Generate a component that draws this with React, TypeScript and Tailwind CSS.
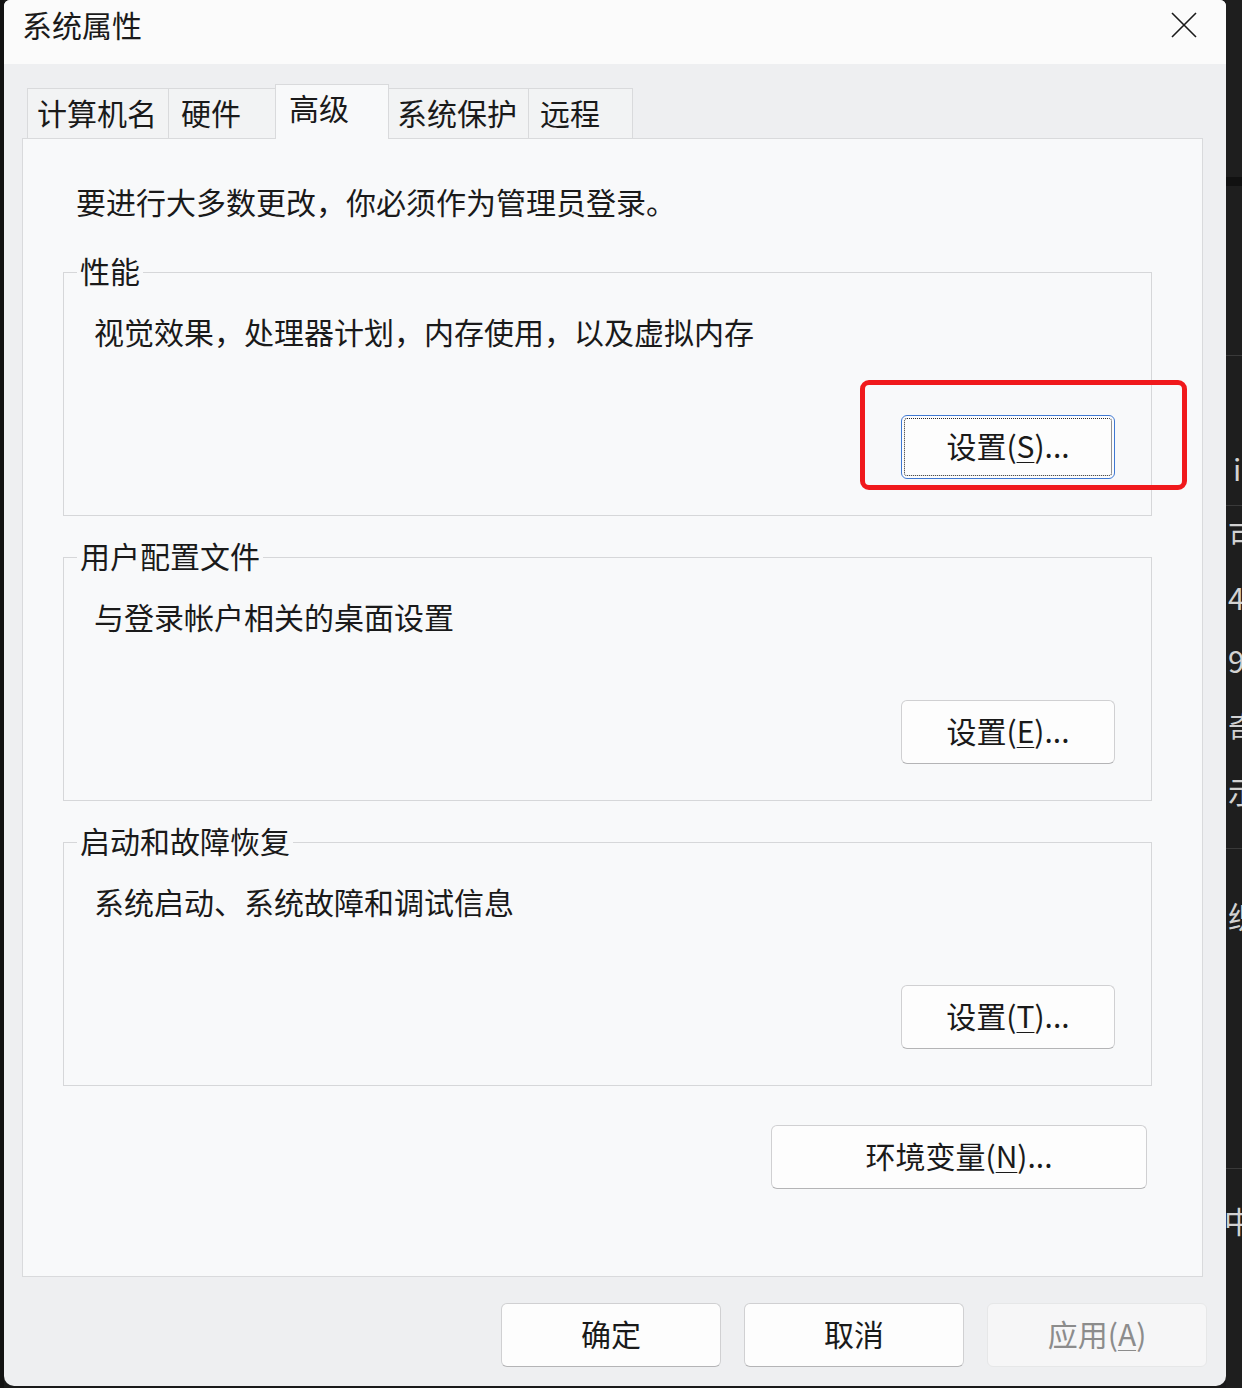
import type { ReactNode } from "react";

type TabDef = { label: string; w: string; pl: string; active?: boolean };

const tabs: TabDef[] = [
  { label: "计算机名", w: "w-[142px]", pl: "pl-[9px]" },
  { label: "硬件", w: "w-[108px]", pl: "pl-[12px]" },
  { label: "高级", w: "w-[114px]", pl: "pl-[13px]", active: true },
  { label: "系统保护", w: "w-[141px]", pl: "pl-[8px]" },
  { label: "远程", w: "w-[105px]", pl: "pl-[11px]" },
];

function Mnemonic({ children }: { children: ReactNode }) {
  return <span className="underline decoration-1 underline-offset-[4px]">{children}</span>;
}

function DialogButton({
  children,
  width,
  focused,
  disabled,
}: {
  children: ReactNode;
  width: string;
  focused?: boolean;
  disabled?: boolean;
}) {
  let tone = "border-[#d0d0d2] border-b-[#b4b4b6] bg-[#fdfdfd] text-[#1a1a1a]";
  if (focused) tone = "border-[#3f78d2] bg-[#fdfdfd] text-[#1a1a1a]";
  if (disabled) tone = "border-[#e6e7e8] bg-[#f6f6f7] text-[#8c8c8c]";
  return (
    <button
      type="button"
      disabled={disabled}
      className={`relative flex h-[64px] ${width} shrink-0 items-center justify-center rounded-[6px] border pb-[4px] leading-[40px] ${tone}`}
    >
      {focused && (
        <span className="pointer-events-none absolute inset-[2px] rounded-[3px] border border-dotted border-[#2a2a2a]" />
      )}
      {children}
    </button>
  );
}

function Group({
  title,
  desc,
  className,
  children,
}: {
  title: string;
  desc: string;
  className: string;
  children: ReactNode;
}) {
  return (
    <fieldset className={`w-[1089px] border border-[#d6d7d9] pb-[36px] pl-[13px] pr-[36px] ${className}`}>
      <legend className="px-[3px] pb-[4px] leading-[36px]">{title}</legend>
      <p className="ml-[17px] mt-[19px] leading-[40px]">{desc}</p>
      <div className="mt-[64px] flex justify-end">{children}</div>
    </fieldset>
  );
}

// scraps of the window sitting behind the dialog
const behind = [
  { ch: "i", top: "top-[448px]", left: "left-[7px]" },
  { ch: "可", top: "top-[514px]", left: "left-[2px]" },
  { ch: "4", top: "top-[577px]", left: "left-[2px]" },
  { ch: "9", top: "top-[640px]", left: "left-[2px]" },
  { ch: "奇", top: "top-[705px]", left: "left-[2px]" },
  { ch: "示", top: "top-[770px]", left: "left-[2px]" },
  { ch: "织", top: "top-[895px]", left: "left-[2px]" },
  { ch: "中", top: "top-[1200px]", left: "left-[-2px]" },
];

export default function App() {
  return (
    <div className="flex h-[1388px] w-[1242px] overflow-hidden bg-[#1a1a1a] font-['Noto_Sans_CJK_SC','Liberation_Sans',sans-serif] text-[30px] text-[#1a1a1a]">
      <div className="w-[4px] shrink-0 bg-[#121212]" />

      <div className="flex h-[1386px] w-[1222px] shrink-0 flex-col overflow-hidden rounded-b-[10px] rounded-t-[6px] bg-[#eeeff1]">
        {/* title bar */}
        <div className="flex h-[64px] shrink-0 items-start justify-between bg-[#fbfbfb] pl-[18px] pr-[29px]">
          <span className="mt-[4px] leading-[40px]">系统属性</span>
          <svg width="26" height="26" viewBox="0 0 26 26" className="mt-[12px]">
            <path d="M1 1 L25 25 M25 1 L1 25" stroke="#1a1a1a" strokeWidth="1.6" fill="none" />
          </svg>
        </div>

        {/* tabs + page */}
        <div className="pl-[18px] pr-[23px] pt-[20px]">
          <div className="relative z-10 -mb-px flex h-[55px] items-end pl-[5px]">
            {tabs.map((t, i) => (
              <div
                key={t.label}
                className={`${t.w} ${t.pl} ${i > 0 ? "-ml-px" : ""} flex items-center border-x border-t border-[#d9dadc] ${
                  t.active
                    ? "relative z-10 h-[55px] bg-[#f8f9fa] pb-[10px]"
                    : "h-[51px] border-b bg-[#f2f3f4] pb-[3px]"
                }`}
              >
                <span className="leading-[40px]">{t.label}</span>
              </div>
            ))}
          </div>

          <div className="flex h-[1139px] flex-col border border-[#d9dadc] bg-[#f8f9fa] pl-[40px] pt-[42px]">
            <p className="ml-[13px] leading-[40px]">要进行大多数更改，你必须作为管理员登录。</p>

            <Group title="性能" desc="视觉效果，处理器计划，内存使用，以及虚拟内存" className="mt-[31px]">
              <div className="relative">
                <DialogButton width="w-[214px]" focused>
                  设置(<Mnemonic>S</Mnemonic>)...
                </DialogButton>
                <span className="pointer-events-none absolute -bottom-[11px] -left-[41px] -right-[72px] -top-[35px] rounded-[9px] border-[5px] border-[#f0191c]" />
              </div>
            </Group>

            <Group title="用户配置文件" desc="与登录帐户相关的桌面设置" className="mt-[21px]">
              <DialogButton width="w-[214px]">
                设置(<Mnemonic>E</Mnemonic>)...
              </DialogButton>
            </Group>

            <Group title="启动和故障恢复" desc="系统启动、系统故障和调试信息" className="mt-[21px]">
              <DialogButton width="w-[214px]">
                设置(<Mnemonic>T</Mnemonic>)...
              </DialogButton>
            </Group>

            <div className="mt-[39px] flex w-[1089px] justify-end pr-[5px]">
              <DialogButton width="w-[376px]">
                环境变量(<Mnemonic>N</Mnemonic>)...
              </DialogButton>
            </div>
          </div>
        </div>

        {/* dialog buttons */}
        <div className="mt-[26px] flex justify-end gap-[23px] pr-[19px]">
          <DialogButton width="w-[220px]">确定</DialogButton>
          <DialogButton width="w-[220px]">取消</DialogButton>
          <DialogButton width="w-[220px]" disabled>
            应用(<Mnemonic>A</Mnemonic>)
          </DialogButton>
        </div>
      </div>

      <div className="relative w-[16px] shrink-0 overflow-hidden bg-[#1e1e1e] text-[#d2d2d2]">
        <div className="absolute left-0 right-0 top-[177px] h-[9px] bg-[#111111]" />
        <div className="absolute left-0 right-0 top-[355px] h-px bg-[#3a3a3a]" />
        <div className="absolute left-0 right-0 top-[505px] h-px bg-[#3a3a3a]" />
        <div className="absolute left-0 right-0 top-[848px] h-px bg-[#3a3a3a]" />
        <div className="absolute left-0 right-0 top-[1168px] h-px bg-[#3a3a3a]" />
        {behind.map((b) => (
          <span key={b.ch} className={`absolute ${b.top} ${b.left} leading-[40px]`}>
            {b.ch}
          </span>
        ))}
      </div>
    </div>
  );
}
